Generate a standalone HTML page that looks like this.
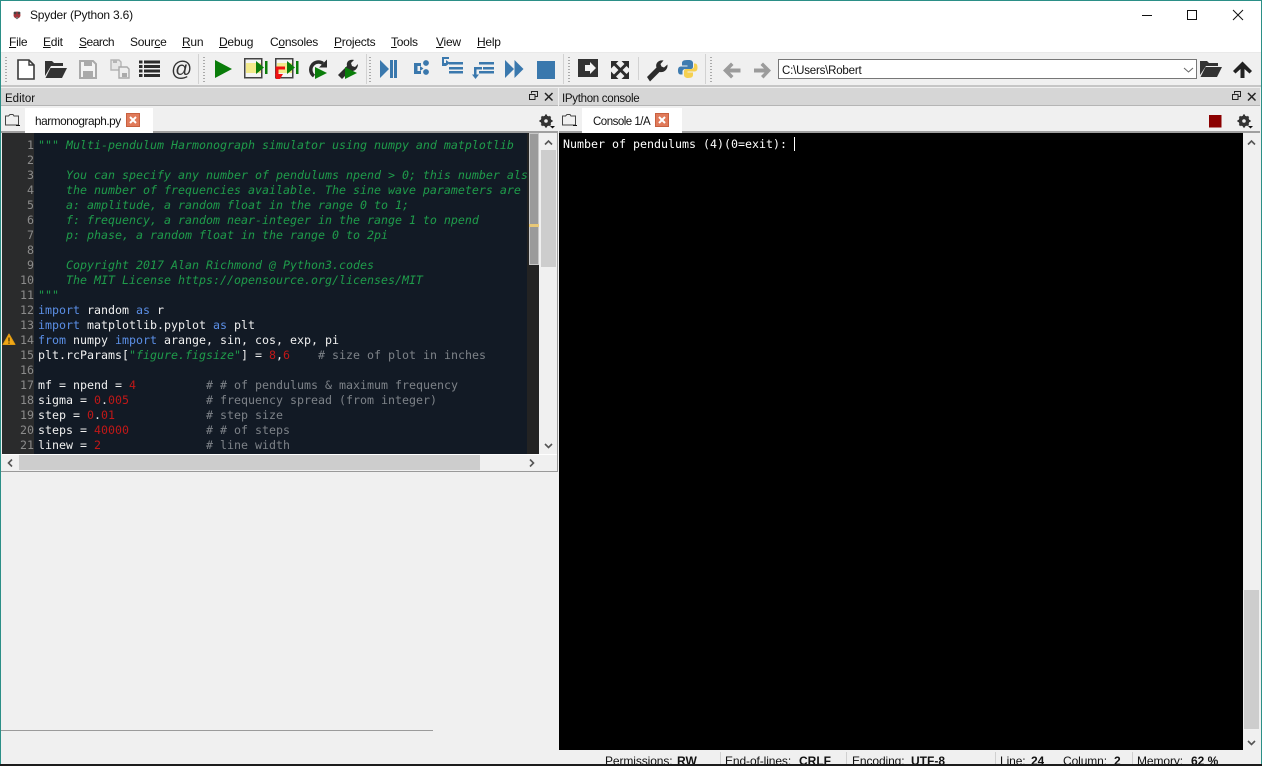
<!DOCTYPE html>
<html><head><meta charset="utf-8"><style>
html,body{margin:0;padding:0;width:1262px;height:766px;overflow:hidden;background:#f0f0f0}
*{box-sizing:border-box}
.a{position:absolute}
.t{position:absolute;font:12px/15px "Liberation Sans",sans-serif;color:#111;white-space:pre}
.m{top:35px;font-size:12px;letter-spacing:-.25px}
.m u{text-decoration-thickness:1px}
.c{position:absolute;left:38px;font:11.63px/15px "DejaVu Sans Mono","Liberation Mono",monospace;color:#f0f0f0;white-space:pre;height:15px}
.n{position:absolute;left:0;width:34px;text-align:right;font:11.63px/15px "DejaVu Sans Mono","Liberation Mono",monospace;color:#8b8b8b}
.g{color:#1f9c4b;font-style:italic}.k{color:#5b8fe6}.r{color:#c01818}.h{color:#7d8288}
.s{position:absolute;top:752px;height:12px;overflow:hidden;font:12px/18px "Liberation Sans",sans-serif;color:#111;white-space:pre;letter-spacing:-.1px}
.s.b{font-weight:bold;letter-spacing:0}
.tab{position:absolute;top:108px;height:25px;background:#fff}
</style></head><body>
<div class="a" style="left:0;top:0;width:1262px;height:52px;background:#fff"></div>
<div class="a" style="left:0;top:52px;width:1262px;height:33px;background:#f0f0f0;border-top:1px solid #e9e9e9"></div>
<div class="a" style="left:0;top:85px;width:1262px;height:2px;background:#c6c6c6"></div>
<!-- dock titles -->
<div class="a" style="left:1px;top:88px;width:557px;height:18px;background:#d6d6d6;border-bottom:1px solid #b5b5b5"></div>
<div class="a" style="left:559px;top:88px;width:701px;height:18px;background:#d6d6d6;border-bottom:1px solid #b5b5b5"></div>
<!-- editor body -->
<div class="a" style="left:0;top:131px;width:558px;height:2px;background:#a0a0a0"></div>
<div class="a" style="left:559px;top:131px;width:701px;height:2px;background:#a0a0a0"></div>
<div class="a" style="left:2px;top:133px;width:537px;height:321px;background:#121a25"></div>
<div class="a" style="left:2px;top:133px;width:32px;height:321px;background:#2a2b2c"></div>
<div class="a" style="left:527px;top:133px;width:12px;height:321px;background:#232323"></div>
<div class="a" style="left:529px;top:133px;width:10px;height:132px;background:#9a9a9a;border:1px solid #c8c8c8"></div>
<div class="a" style="left:529px;top:224px;width:10px;height:3px;background:#e8c878"></div>
<div class="a" style="left:539px;top:133px;width:19px;height:322px;background:#f0f0f0"></div>
<div class="a" style="left:541px;top:150px;width:15px;height:117px;background:#cdcdcd"></div>
<div class="a" style="left:2px;top:454px;width:555px;height:17px;background:#f0f0f0;border-top:1px solid #fff"></div>
<div class="a" style="left:19px;top:455px;width:461px;height:15px;background:#cdcdcd"></div>
<div class="a" style="left:0;top:471px;width:558px;height:1px;background:#999"></div>
<div class="a" style="left:557px;top:133px;width:1px;height:339px;background:#999"></div>
<div class="a" style="left:1px;top:730px;width:432px;height:1px;background:#9b9b9b"></div>
<!-- console -->
<div class="a" style="left:559px;top:133px;width:684px;height:617px;background:#000"></div>
<div class="a" style="left:1243px;top:133px;width:17px;height:617px;background:#f0f0f0"></div>
<div class="a" style="left:1244px;top:590px;width:15px;height:139px;background:#cdcdcd"></div>
<div class="a" style="left:794px;top:137px;width:1px;height:14px;background:#fff"></div>
<!-- window frame -->
<div class="a" style="left:0;top:0;width:1262px;height:1px;background:#2b8f87"></div>
<div class="a" style="left:0;top:0;width:1px;height:766px;background:#2b8f87"></div>
<div class="a" style="left:1261px;top:0;width:1px;height:766px;background:#2b8f87"></div>
<div class="a" style="left:0;top:764px;width:1262px;height:2px;background:#1c1c1c"></div>
<!-- tabs -->
<div class="tab" style="left:25px;width:128px"></div>
<div class="tab" style="left:582px;width:100px"></div>
<!-- combo -->
<div class="a" style="left:778px;top:59px;width:419px;height:20px;background:#fff;border:1px solid #777"></div>

<div class="t" style="left:30px;top:8px;letter-spacing:-.2px">Spyder (Python 3.6)</div>
<div class="t m" style="left:9px"><u>F</u>ile</div>
<div class="t m" style="left:43px"><u>E</u>dit</div>
<div class="t m" style="left:79px;letter-spacing:-.5px"><u>S</u>earch</div>
<div class="t m" style="left:130px">Sour<u>c</u>e</div>
<div class="t m" style="left:182px"><u>R</u>un</div>
<div class="t m" style="left:219px"><u>D</u>ebug</div>
<div class="t m" style="left:270px">C<u>o</u>nsoles</div>
<div class="t m" style="left:334px"><u>P</u>rojects</div>
<div class="t m" style="left:391px"><u>T</u>ools</div>
<div class="t m" style="left:436px"><u>V</u>iew</div>
<div class="t m" style="left:477px"><u>H</u>elp</div>
<div class="t" style="left:5px;top:92px;font-size:11.5px">Editor</div>
<div class="t" style="left:562px;top:92px;font-size:11.5px;letter-spacing:-.3px">IPython console</div>
<div class="t" style="left:35px;top:114px;font-size:11.8px;letter-spacing:-.45px">harmonograph.py</div>
<div class="t" style="left:593px;top:115px;font-size:11.5px;letter-spacing:-.5px">Console 1/A</div>
<div class="t" style="left:782px;top:64px;font-size:11.5px;letter-spacing:-.2px">C:\Users\Robert</div>

<!-- code -->
<div class="a" style="left:0;top:0;width:527px;height:454px;overflow:hidden">
<div class="n" style="top:138px">1</div><div class="n" style="top:153px">2</div><div class="n" style="top:168px">3</div><div class="n" style="top:183px">4</div><div class="n" style="top:198px">5</div><div class="n" style="top:213px">6</div><div class="n" style="top:228px">7</div><div class="n" style="top:243px">8</div><div class="n" style="top:258px">9</div><div class="n" style="top:273px">10</div><div class="n" style="top:288px">11</div><div class="n" style="top:303px">12</div><div class="n" style="top:318px">13</div><div class="n" style="top:333px">14</div><div class="n" style="top:348px">15</div><div class="n" style="top:363px">16</div><div class="n" style="top:378px">17</div><div class="n" style="top:393px">18</div><div class="n" style="top:408px">19</div><div class="n" style="top:423px">20</div><div class="n" style="top:438px">21</div>
<div class="c g" style="top:138px">""" Multi-pendulum Harmonograph simulator using numpy and matplotlib</div>
<div class="c g" style="top:168px">    You can specify any number of pendulums npend &gt; 0; this number also</div>
<div class="c g" style="top:183px">    the number of frequencies available. The sine wave parameters are</div>
<div class="c g" style="top:198px">    a: amplitude, a random float in the range 0 to 1;</div>
<div class="c g" style="top:213px">    f: frequency, a random near-integer in the range 1 to npend</div>
<div class="c g" style="top:228px">    p: phase, a random float in the range 0 to 2pi</div>
<div class="c g" style="top:258px">    Copyright 2017 Alan Richmond @ Python3.codes</div>
<div class="c g" style="top:273px">    The MIT License https://opensource.org/licenses/MIT</div>
<div class="c g" style="top:288px">"""</div>
<div class="c" style="top:303px"><span class="k">import</span> random <span class="k">as</span> r</div>
<div class="c" style="top:318px"><span class="k">import</span> matplotlib.pyplot <span class="k">as</span> plt</div>
<div class="c" style="top:333px"><span class="k">from</span> numpy <span class="k">import</span> arange, sin, cos, exp, pi</div>
<div class="c" style="top:348px">plt.rcParams[<span class="g">"figure.figsize"</span>] = <span class="r">8</span>,<span class="r">6</span>    <span class="h"># size of plot in inches</span></div>
<div class="c" style="top:378px">mf = npend = <span class="r">4</span>          <span class="h"># # of pendulums &amp; maximum frequency</span></div>
<div class="c" style="top:393px">sigma = <span class="r">0</span>.<span class="r">005</span>           <span class="h"># frequency spread (from integer)</span></div>
<div class="c" style="top:408px">step = <span class="r">0</span>.<span class="r">01</span>             <span class="h"># step size</span></div>
<div class="c" style="top:423px">steps = <span class="r">40000</span>           <span class="h"># # of steps</span></div>
<div class="c" style="top:438px">linew = <span class="r">2</span>               <span class="h"># line width</span></div>
</div>
<div class="c" style="left:563px;top:137px;color:#fff">Number of pendulums (4)(0=exit): </div>

<!-- status -->
<div class="s" style="left:605px">Permissions:</div><div class="s b" style="left:677px">RW</div>
<div class="s" style="left:725px">End-of-lines:</div><div class="s b" style="left:799px">CRLF</div>
<div class="s" style="left:852px">Encoding:</div><div class="s b" style="left:911px">UTF-8</div>
<div class="s" style="left:1000px">Line:</div><div class="s b" style="left:1031px">24</div>
<div class="s" style="left:1063px">Column:</div><div class="s b" style="left:1114px">2</div>
<div class="s" style="left:1137px">Memory:</div><div class="s b" style="left:1191px">62 %</div>
<div class="a" style="left:720px;top:752px;width:1px;height:12px;background:#d0d0d0"></div>
<div class="a" style="left:846px;top:752px;width:1px;height:12px;background:#d0d0d0"></div>
<div class="a" style="left:995px;top:752px;width:1px;height:12px;background:#d0d0d0"></div>
<div class="a" style="left:1132px;top:752px;width:1px;height:12px;background:#d0d0d0"></div>

<svg class="a" style="left:0;top:0" width="1262" height="766" viewBox="0 0 1262 766" fill="none">
<!-- app icon -->
<circle cx="17" cy="15" r="3.5" fill="#a5333a"/><circle cx="15" cy="13" r="1.4" fill="#444"/><circle cx="19" cy="13" r="1.4" fill="#444"/><circle cx="17" cy="18" r="1.2" fill="#777"/>
<!-- window buttons -->
<path d="M1142 15.5h10" stroke="#111"/><rect x="1187.5" y="10.5" width="9" height="9" stroke="#111"/><path d="M1233 10l10 10M1243 10l-10 10" stroke="#111"/>
<!-- grippers -->
<g stroke="#aaa" stroke-width="2" stroke-dasharray="1 2"><path d="M6 57v25M204 57v25M370 57v25M569 57v25M711 57v25"/></g>
<g stroke="#d2d2d2"><path d="M198.500 54v30M366.500 54v30M563.500 54v30M638.500 57v23M705.500 54v30"/></g>
<!-- new -->
<path d="M18 60h11l5 5v14H18z" fill="#fff" stroke="#3a3a3a" stroke-width="1.6"/><path d="M29 60v5h5" stroke="#3a3a3a" stroke-width="1.4"/>
<!-- open -->
<path d="M45 76V61h7l2 2h9v3H51z" fill="#333"/><path d="M45.500 78l5-10h16.500l-5 10z" fill="#333"/>
<!-- save -->
<path d="M80 61h13l3 3v14H80z" fill="#f4f4f4" stroke="#aaa" stroke-width="2"/><rect x="84" y="61" width="8" height="5" fill="#aaa"/><rect x="83" y="71" width="10" height="6" fill="#aaa"/>
<!-- save all -->
<path d="M111 60h8l2 2v8h-10z" fill="#e6e6e6" stroke="#b5b5b5" stroke-width="1.4"/><path d="M119 67h8l2 2v9h-10z" fill="#eee" stroke="#aaa" stroke-width="1.4"/><rect x="122" y="73" width="5" height="4" fill="#aaa"/><rect x="113" y="60" width="4" height="3" fill="#b5b5b5"/>
<!-- list -->
<path d="M139 62h3.500M144 62h16M139 66.500h3.500M144 66.500h16M139 71h3.500M144 71h16M139 75.500h3.500M144 75.500h16" stroke="#2c2c2c" stroke-width="3"/>
<text x="171" y="76" font-family="Liberation Sans,sans-serif" font-size="21" fill="#333">@</text>
<!-- run -->
<path d="M215 60l17 9-17 9z" fill="#0a7d0a"/>
<rect x="244.750" y="58.750" width="17" height="19" stroke="#444" stroke-width="1.500" fill="#f4f4f4"/><rect x="246" y="63" width="15" height="10" fill="#f2ea8c"/><path d="M256 61l8 6.500-8 6.500z" fill="#0a7d0a"/><rect x="265" y="61" width="2.500" height="13" fill="#0a7d0a"/>
<rect x="275.750" y="58.750" width="17" height="19" stroke="#444" stroke-width="1.500" fill="#f4f4f4"/><rect x="277" y="63" width="15" height="10" fill="#f2ea8c"/><path d="M287 61l8 6.500-8 6.500z" fill="#0a7d0a"/><rect x="296" y="61" width="2.500" height="13" fill="#0a7d0a"/><path d="M285 68h-8v8" stroke="#ee1111" stroke-width="3"/><path d="M275 74h8l-3 5h-4z" fill="#ee1111"/>
<path d="M323 63.500A7.500 7.500 0 1 0 314 76" stroke="#2c2c2c" stroke-width="3.500"/><path d="M327 59.500v8h-8z" fill="#2c2c2c"/><path d="M315 67l12 6-12 6z" fill="#0a7d0a"/>
<path d="M338 75l9-9c-1-4 2-7 7-6l-3 3 1 3 3 1 3-3c0 5-4 8-8 7l-8 8z" fill="#2c2c2c"/><path d="M345 67l12 6-12 6z" fill="#0a7d0a"/>
<!-- blue -->
<g fill="#3a78ad">
<path d="M380 60l9 9-9 9z"/><rect x="390" y="60" width="3" height="18"/><rect x="394" y="60" width="3" height="18"/>
<path d="M414 63h7v3h-3.500v5h3.500v3h-7z"/><path d="M420 66l3.500 2.500-3.500 2.500z"/><circle cx="426" cy="63" r="2.900"/><circle cx="426" cy="72" r="2.900"/>
<path d="M449 62h14v2.500h-14zM449 67h14v2.500h-14zM449 71h14v2.500h-14z"/><path d="M442 57h7v2h-5v4h2v3h-4z"/><path d="M446 60l4 3-4 3z"/>
<path d="M479 62h15v2.500h-15zM483 67h11v2.500h-11zM479 71h15v2.500h-15z"/><path d="M474 67h8v2.500h-5.500v6H474z"/><path d="M472 74.500h7l-3.500 4.500z"/>
<path d="M505 60l9 9-9 9zM514.500 60l9 9-9 9z"/>
<rect x="537" y="61" width="18" height="18"/>
</g>
<!-- maximize pane -->
<rect x="578" y="59" width="20" height="18" fill="#333"/><path d="M585 65h5v-3l6 6-6 6v-3h-5z" fill="#f4f4f4"/>
<!-- expand -->
<path d="M614.500 64l12 12M626.500 64l-12 12" stroke="#2c2c2c" stroke-width="3"/>
<path d="M611 61h7.500l-7.500 7.500zM629 61v7.500L621.500 61zM611 79v-7.500l7.500 7.500zM629 79h-7.500l7.500-7.500z" fill="#2c2c2c"/>
<!-- wrench -->
<path d="M647 77l9.500-9.500c-1.500-4 2-8 7-7l-3 3.500 1 2.500 2.500 1 3.500-3c.5 5-3.500 8.500-8 7.500l-9.500 9.500z" fill="#2c2c2c"/>
<!-- python -->
<path d="M687 60c-4 0-5 1.500-5 3v2.500h5.500v1H681c-2.500 0-3 2-3 4s.5 4 2.500 4h2v-3c0-1.500 1.500-2.500 3-2.500h5.500c1 0 2-1 2-2V63c0-2-2-3-4-3z" fill="#3f7cb0"/><path d="M688 78c4 0 5-1.500 5-3v-2.500h-5.500v-1h7c2.500 0 3-2 3-4s-.5-4-2.500-4h-1v3c0 1.500-1.500 2.500-3 2.500H686c-1 0-2 1-2 2V75c0 2 2 3 4 3z" fill="#f5d050"/>
<!-- nav -->
<path d="M723 70.500l8-8 2.500 2.500-3.500 3.500h10.500v4H730l3.500 3.500-2.500 2.500z" fill="#9b9b9b"/>
<path d="M771 70.500l-8-8-2.500 2.500 3.500 3.500H754v4h10.500l-3.500 3.500 2.500 2.500z" fill="#9b9b9b"/>
<path d="M1184 68l4.500 4 4.500-4" stroke="#666"/>
<path d="M1200 75V61h7l2 2h9v3h-12z" fill="#333"/><path d="M1200.500 77l5-10h16.500l-5 10z" fill="#333"/>
<path d="M1242.500 61.500l9.500 9.500-2.500 2.500-5-4.500V78h-4V69l-5 4.500-2.500-2.500z" fill="#222"/>
<!-- dock buttons -->
<g stroke="#222"><path d="M531.500 93.500v-2h6v5h-2M529.500 94.500h5.500v5h-5.500z"/><path d="M1234.500 93.500v-2h6v5h-2M1232.500 94.500h5.500v5h-5.500z"/></g>
<path d="M545 93l7.500 7.500M552.500 93l-7.500 7.500M1248 93l7.500 7.500M1255.500 93l-7.500 7.500" stroke="#222" stroke-width="1.500"/>
<!-- tab folders -->
<path d="M5.500 125v-9h3l1.500-1.500h3l1 1.500h4.500v9z" stroke="#444"/><path d="M16 125.500h4" stroke="#111"/>
<path d="M562.500 125v-9h3l1.500-1.500h3l1 1.500h4.500v9z" stroke="#444"/><path d="M573 125.500h4" stroke="#111"/>
<!-- close tabs -->
<rect x="126.500" y="113.500" width="13" height="13" fill="#e07a5a" stroke="#c8603f"/><path d="M130 117l6 6M136 117l-6 6" stroke="#fff" stroke-width="2"/>
<rect x="655.500" y="113.500" width="13" height="13" fill="#e07a5a" stroke="#c8603f"/><path d="M659 117l6 6M665 117l-6 6" stroke="#fff" stroke-width="2"/>
<rect x="1209" y="115" width="12.500" height="12.500" fill="#8b0000"/>
<!-- gears -->
<g><circle cx="546" cy="121" r="4" stroke="#333" stroke-width="2.800"/><path d="M546 114.500v13M539.500 121h13M541.500 116.500l9 9M550.500 116.500l-9 9" stroke="#333" stroke-width="2"/><circle cx="546" cy="121" r="1.800" fill="#f0f0f0"/><path d="M550 126h5l-2.500 2.500z" fill="#111"/></g>
<g><circle cx="1244" cy="121" r="4" stroke="#333" stroke-width="2.800"/><path d="M1244 114.500v13M1237.500 121h13M1239.500 116.500l9 9M1248.500 116.500l-9 9" stroke="#333" stroke-width="2"/><circle cx="1244" cy="121" r="1.800" fill="#f0f0f0"/><path d="M1248 126h5l-2.500 2.500z" fill="#111"/></g>
<!-- scroll arrows -->
<g stroke="#555" stroke-width="1.600">
<path d="M545 144.500l3.500-3.500 3.500 3.500"/><path d="M545 444l3.500 3.500 3.500-3.500"/>
<path d="M12 459.500l-3.500 3.500 3.500 3.500"/><path d="M530 459.500l3.500 3.500-3.500 3.500"/>
<path d="M1248 144.500l3.500-3.500 3.500 3.500"/><path d="M1248 741l3.500 3.500 3.500-3.500"/>
</g>
<!-- warning -->
<path d="M9 334l6 10.500H3z" fill="#f0a818" stroke="#e09a10" stroke-linejoin="round"/><path d="M9 337.500v4M9 342.500v1.300" stroke="#3a2a00" stroke-width="1.200"/>
</svg>
</body></html>
